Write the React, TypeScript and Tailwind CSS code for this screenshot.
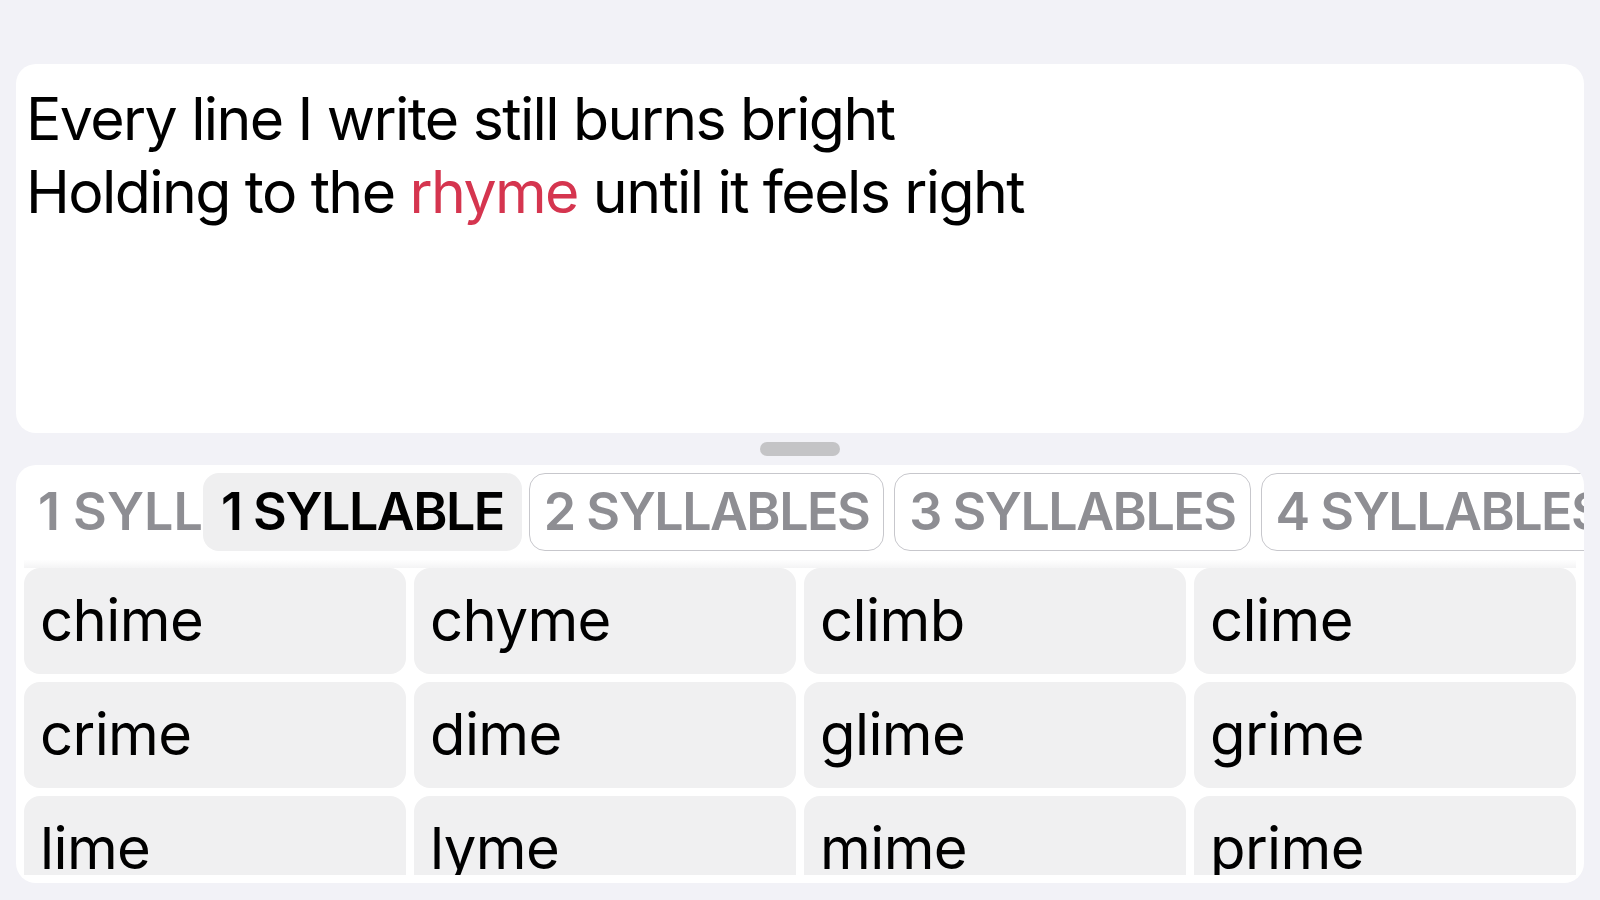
import React from 'react';

const lyrics = [
  { before: 'Every line I write still burns bright' },
  { before: 'Holding to the ', accent: 'rhyme', after: ' until it feels right' },
];

const tabs = ['2 SYLLABLES', '3 SYLLABLES', '4 SYLLABLES'];

const words = [
  'chime', 'chyme', 'climb', 'clime',
  'crime', 'dime', 'glime', 'grime',
  'lime', 'lyme', 'mime', 'prime',
];

const font = { fontFamily: 'Inter, "Noto Sans", sans-serif' };

function Editor() {
  return (
    <div className="h-[369px] shrink-0 rounded-[20px] bg-white px-[10px] pt-[18px]">
      <div className="text-[59px] leading-[73px] text-black tracking-[-1.6px]">
        {lyrics.map((line, i) => (
          <div key={i}>
            {line.before}
            {line.accent && <span className="text-[#d5354f]">{line.accent}</span>}
            {line.after}
          </div>
        ))}
      </div>
    </div>
  );
}

function SyllableTabs() {
  return (
    <div className="flex shrink-0 items-stretch overflow-hidden pl-2 pt-2">
      <div className="flex h-[78px] w-[179px] flex-none items-center overflow-hidden whitespace-nowrap pl-[14px] text-[52px] font-semibold text-[#8e8e93]">
        1 SYLLABLE
      </div>
      <div className="flex h-[78px] flex-none items-center rounded-[16px] bg-[#efeff0] px-[18px] text-[52px] font-semibold tracking-[-1.5px] whitespace-nowrap text-black">
        1 SYLLABLE
      </div>
      <div className="ml-[7px] flex gap-[10px]">
        {tabs.map((t) => (
          <div
            key={t}
            className="flex h-[78px] flex-none items-center whitespace-nowrap rounded-[16px] border-[1.5px] border-[#c7c7cc] px-[14px] text-[52px] font-semibold tracking-[-1.5px] text-[#8e8e93]"
          >
            {t}
          </div>
        ))}
      </div>
    </div>
  );
}

function RhymeGrid() {
  return (
    <div className="flex min-h-0 flex-1 flex-col px-2 pb-2">
      <div className="h-[17px] shrink-0 bg-gradient-to-b from-white via-white to-[#f4f4f5]" />
      <div className="min-h-0 flex-1 overflow-hidden">
        <div className="grid grid-cols-4 gap-2">
          {words.map((w) => (
            <div
              key={w}
              className="flex h-[106px] items-center rounded-[16px] bg-[#f0f0f1] pb-[2px] pl-[16px] text-[58px] tracking-[-0.6px] text-black"
            >
              {w}
            </div>
          ))}
        </div>
      </div>
    </div>
  );
}

export default function App() {
  return (
    <div className="flex h-[900px] w-full flex-col bg-[#f2f2f7] px-4 pt-16 pb-[17px]" style={font}>
      <Editor />
      <div className="mx-auto my-[9px] h-[14px] w-[80px] shrink-0 rounded-full bg-[#c4c4c6]" />
      <div className="flex min-h-0 flex-1 flex-col overflow-hidden rounded-[20px] bg-white">
        <SyllableTabs />
        <RhymeGrid />
      </div>
    </div>
  );
}
